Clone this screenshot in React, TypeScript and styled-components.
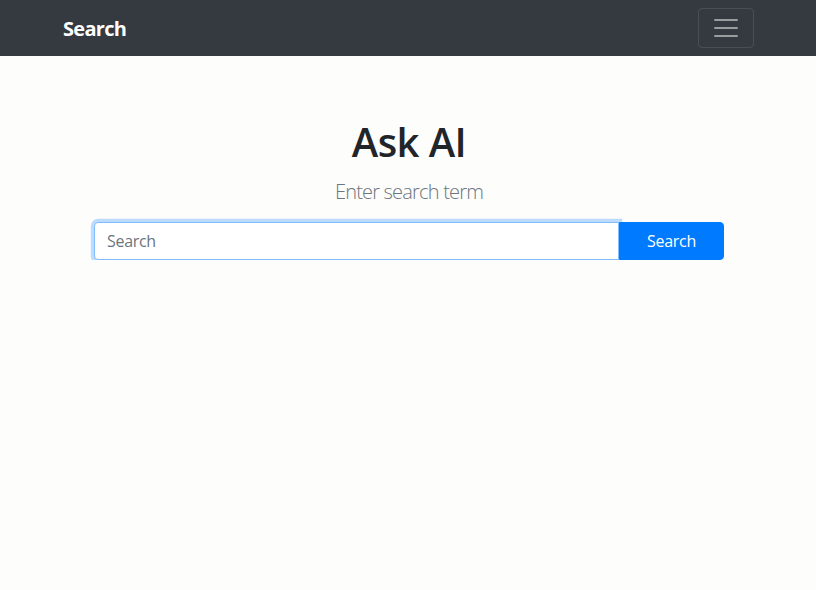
import React from "react";
import styled, { createGlobalStyle } from "styled-components";

const Global = createGlobalStyle`
  html, body { margin: 0; padding: 0; }
  body {
    background: #fdfdfc;
    font-family: "Open Sans", "Noto Sans", "Liberation Sans", sans-serif;
    color: #212529;
    font-size: 16px;
    line-height: 1.5;
  }
  * { box-sizing: border-box; }
`;

const Navbar = styled.nav`
  background: #343a40;
  height: 56px;
  display: flex;
  align-items: center;
`;

const NavContainer = styled.div`
  width: 720px;
  margin: 0 auto;
  padding: 0 15px;
  display: flex;
  align-items: center;
  justify-content: space-between;
`;

const Brand = styled.a`
  color: #fff;
  font-size: 20px;
  font-weight: 700;
  letter-spacing: -0.7px;
  text-decoration: none;
  line-height: 30px;
  margin-top: 2px;
`;

const Toggler = styled.button`
  width: 56px;
  height: 40px;
  background: transparent;
  border: 1px solid rgba(255, 255, 255, 0.1);
  border-radius: 4px;
  display: flex;
  align-items: center;
  justify-content: center;
  padding: 0;
  margin-right: -1px;
`;

const Main = styled.main`
  width: 720px;
  margin: 0 auto;
  padding: 62px 15px 0;
  display: flex;
  flex-direction: column;
  align-items: center;
`;

const Title = styled.h1`
  margin: 0 0 11px 2px;
  font-size: 40px;
  font-weight: 600;
  line-height: 1.2;
  letter-spacing: -0.6px;
`;

const Lead = styled.p`
  margin: 0 0 15px 2px;
  font-size: 20px;
  font-weight: 300;
  color: #6c757d;
  letter-spacing: -0.8px;
  line-height: 30px;
`;

const InputGroup = styled.div`
  width: 630px;
  margin-left: 2px;
  display: flex;
`;

const Input = styled.input`
  flex: 1;
  height: 38px;
  padding: 6px 12px;
  font-size: 16px;
  font-family: inherit;
  color: #495057;
  background: #fff;
  border: 1px solid #80bdff;
  border-radius: 4px 0 0 4px;
  box-shadow: 0 0 0 3.2px rgba(0, 123, 255, 0.25);
  outline: none;
  &::placeholder { color: #6c757d; letter-spacing: -0.3px; }
`;

const Button = styled.button`
  width: 105px;
  height: 38px;
  background: #007bff;
  color: #fff;
  border: 1px solid #007bff;
  border-radius: 0 4px 4px 0;
  font-size: 16px;
  font-family: inherit;
  letter-spacing: -0.3px;
  padding: 0;
`;

export default function App() {
  return (
    <>
      <Global />
      <Navbar>
        <NavContainer>
          <Brand href="#">Search</Brand>
          <Toggler aria-label="Toggle navigation">
            <svg width="30" height="30" viewBox="0 0 30 30">
              <path
                d="M4 7h22M4 15h22M4 23h22"
                stroke="rgba(255,255,255,0.5)"
                strokeWidth="2"
                strokeLinecap="round"
              />
            </svg>
          </Toggler>
        </NavContainer>
      </Navbar>
      <Main>
        <Title>Ask AI</Title>
        <Lead>Enter search term</Lead>
        <InputGroup>
          <Input placeholder="Search" autoFocus />
          <Button>Search</Button>
        </InputGroup>
      </Main>
    </>
  );
}
